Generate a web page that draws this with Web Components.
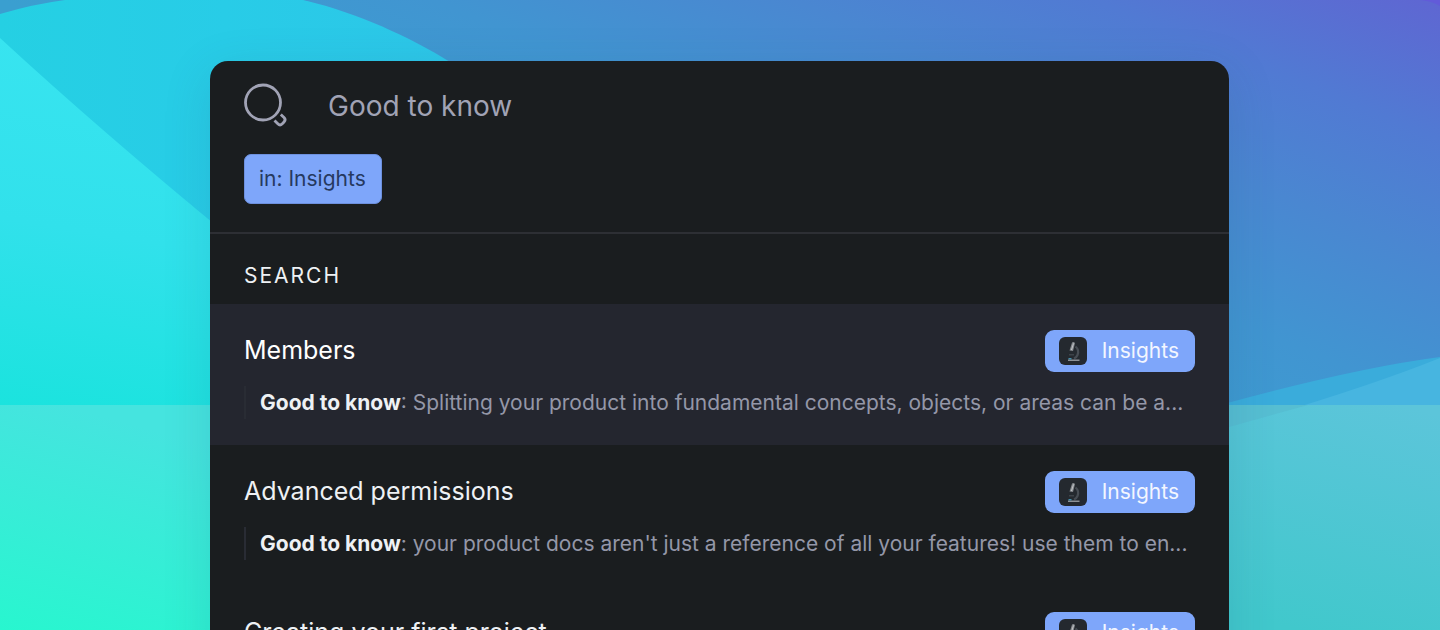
<!DOCTYPE html>
<html lang="en">
<head>
<meta charset="utf-8">
<title>Search</title>
<style>
  html, body { margin: 0; height: 100%; }
  body { font-family: Inter, "Liberation Sans", sans-serif; overflow: hidden; background: #3f93d0; }
</style>
</head>
<body>
<search-stage>
  <search-panel>
    <search-header slot="header" query="Good to know" scope="in: Insights"></search-header>
    <search-results heading="Search">
      <search-result active space="Insights">
        Members
        <span slot="snippet"><strong>Good to know</strong>: Splitting your product into fundamental concepts, objects, or areas can be a...</span>
      </search-result>
      <search-result space="Insights">
        Advanced permissions
        <span slot="snippet"><strong>Good to know</strong>: your product docs aren't just a reference of all your features! use them to en...</span>
      </search-result>
      <search-result space="Insights">
        Creating your first project
      </search-result>
    </search-results>
  </search-panel>
</search-stage>

<template id="stage">
  <style>
    :host { display: block; position: relative; height: 100vh; overflow: hidden; }
    .art { position: absolute; inset: 0; width: 100%; height: 100%; }
    main { position: relative; padding: 61px 211px 0 210px; }
  </style>
  <svg class="art" viewBox="0 0 1440 630" preserveAspectRatio="none" aria-hidden="true">
    <defs>
      <linearGradient id="sky" gradientUnits="userSpaceOnUse" x1="0" y1="0" x2="199" y2="-497">
        <stop offset="0" stop-color="#3a9fd0"/><stop offset=".3" stop-color="#4195d1"/><stop offset=".55" stop-color="#4a87d1"/><stop offset=".76" stop-color="#517ad3"/><stop offset="1" stop-color="#5f66d2"/>
      </linearGradient>
      <linearGradient id="hill" x1="0" x2="1" y1="0" y2="0">
        <stop offset="0" stop-color="#25d0e3"/><stop offset=".5" stop-color="#28cce7"/><stop offset="1" stop-color="#2dc6e8"/>
      </linearGradient>
      <linearGradient id="slope" gradientUnits="userSpaceOnUse" x1="60" y1="40" x2="0" y2="405">
        <stop offset="0" stop-color="#38e4f0"/><stop offset=".5" stop-color="#31e1eb"/><stop offset="1" stop-color="#1be3de"/>
      </linearGradient>
      <linearGradient id="sea" gradientUnits="userSpaceOnUse" x1="60" y1="405" x2="0" y2="630">
        <stop offset="0" stop-color="#45e4df"/><stop offset="1" stop-color="#28f6cf"/>
      </linearGradient>
      <linearGradient id="bay" gradientUnits="userSpaceOnUse" x1="1360" y1="395" x2="1300" y2="630">
        <stop offset="0" stop-color="#5cc5da"/><stop offset="1" stop-color="#41c8cc"/>
      </linearGradient>
    </defs>
    <path fill="url(#sky)" d="M0 0H1440V630H0z"/>
    <path fill="#625bd9" d="M1420 0Q1432 1 1440 6V0z"/>
    <path fill="url(#hill)" d="M0 14Q34 4 65 0H303C355 12 408 36 450 62V300H0z"/>
    <path fill="url(#slope)" d="M0 38Q102 132 230 237V405H0z"/>
    <path fill="url(#sea)" d="M0 405H230V630H0z"/>
    <path fill="#3aacdb" d="M1220 405Q1355 368 1440 357V405z"/>
    <path fill="#47b5e0" d="M1220 430Q1355 392 1440 358V430z"/>
    <path fill="url(#bay)" d="M1200 405H1440V630H1200z"/>
    <path fill="#56bed2" d="M1229 405H1308L1229 427z"/>
  </svg>
  <main><slot></slot></main>
</template>

<template id="panel">
  <style>
    :host { display: block; min-height: 100vh; border-radius: 18px 18px 0 0; overflow: hidden; background: #1a1d1f; box-shadow: 0 12px 48px rgba(40, 80, 120, .16); }
  </style>
  <slot name="header"></slot>
  <slot></slot>
</template>

<template id="header">
  <style>
    :host { display: block; padding: 18px 34px 28px; border-bottom: 2px solid #2d2f34; }
    label { display: flex; align-items: center; gap: 36px; height: 54px; }
    svg { width: 48px; height: 48px; flex: none; }
    input { flex: 1; min-width: 0; height: 48px; padding: 0; border: 0; outline: 0; background: none; color: #a1a3b5; font: 400 28px/48px Inter, "Liberation Sans", sans-serif; }
    button { display: block; height: 50px; margin-top: 21px; padding: 0 15px 0 14px; border: 1px solid #6d90dd; border-radius: 7px; background: #7ea6fa; color: #26395f; font: 400 21px/48px Inter, "Liberation Sans", sans-serif; }
  </style>
  <label>
    <svg viewBox="0 0 48 48" fill="none" stroke="#a1a3b5" stroke-width="2.8" aria-hidden="true">
      <circle cx="19" cy="20.500" r="17.500"/>
      <path d="M30.500 38.500L33.800 41.800Q36 44 38.300 41.800L40 40Q42.200 37.700 40 35.500L36.800 32.500"/>
    </svg>
    <input type="text" aria-label="Search query">
  </label>
  <button type="button"></button>
</template>

<template id="results">
  <style>
    :host { display: block; }
    h2 { margin: 0; padding: 27px 34px 13px; color: #eef1f4; font-size: 21px; line-height: 30px; font-weight: 400; letter-spacing: 2px; text-transform: uppercase; }
  </style>
  <h2></h2>
  <slot></slot>
</template>

<template id="result">
  <style>
    :host { display: block; padding: 26px 34px; color: #eef1f4; }
    :host([active]) { background: #24262f; color: #fff; }
    .head { display: flex; align-items: center; justify-content: space-between; height: 42px; }
    h3 { margin: 0; font-size: 25px; line-height: 40px; font-weight: 400; padding-bottom: 2px; }
    p { margin: 14px 0 0; padding-left: 14px; border-left: 2px solid #292c34; height: 33px; font-size: 21px; line-height: 33px; color: #9497a8; white-space: nowrap; overflow: hidden; }
  </style>
  <div class="head"><h3><slot></slot></h3><space-badge></space-badge></div>
  <p><slot name="snippet"></slot></p>
</template>

<template id="badge">
  <style>
    :host { display: flex; align-items: center; gap: 15px; height: 42px; box-sizing: border-box; padding: 0 16px 0 14px; border-radius: 9px; background: #7ea6fa; color: #f3f6ff; font-size: 21px; line-height: 42px; }
    svg { width: 28px; height: 28px; flex: none; }
  </style>
  <svg viewBox="0 0 28 28" aria-hidden="true">
    <rect width="28" height="28" rx="6" fill="#24292f"/>
    <path d="M13 5.500Q14.500 4.500 16 6L14 14L10.500 13.500z" fill="#85898e"/>
    <path d="M14 6.500L15 6.200L13 13L12 13z" fill="#c6c9cc"/>
    <path d="M16.500 9.500Q20.500 13 18.500 18Q17.500 20.500 15 21.500" fill="none" stroke="#474d54" stroke-width="2.2"/>
    <path d="M10 17H15V18.500H10z" fill="#3d4349"/>
    <path d="M9 22.500H20.500V24H9z" fill="#8c9196"/>
    <path d="M9.500 21H12.500V22.500H9.500z" fill="#468fab"/>
  </svg>
  <slot></slot>
</template>

<script>
  class Base extends HTMLElement {
    constructor(id) {
      super();
      this.attachShadow({ mode: "open" }).append(document.getElementById(id).content.cloneNode(true));
    }
    $(selector) { return this.shadowRoot.querySelector(selector); }
  }
  customElements.define("space-badge", class extends Base { constructor() { super("badge"); } });
  customElements.define("search-result", class extends Base {
    constructor() { super("result"); }
    connectedCallback() {
      this.$("space-badge").textContent = this.getAttribute("space");
      this.querySelectorAll("strong").forEach(s => { s.style.color = "#eef1f4"; s.style.fontWeight = 700; });
    }
  });
  customElements.define("search-results", class extends Base {
    constructor() { super("results"); }
    connectedCallback() { this.$("h2").textContent = this.getAttribute("heading"); }
  });
  customElements.define("search-header", class extends Base {
    constructor() { super("header"); }
    connectedCallback() {
      this.$("input").value = this.getAttribute("query");
      this.$("button").textContent = this.getAttribute("scope");
    }
  });
  customElements.define("search-panel", class extends Base { constructor() { super("panel"); } });
  customElements.define("search-stage", class extends Base { constructor() { super("stage"); } });
</script>
</body>
</html>
